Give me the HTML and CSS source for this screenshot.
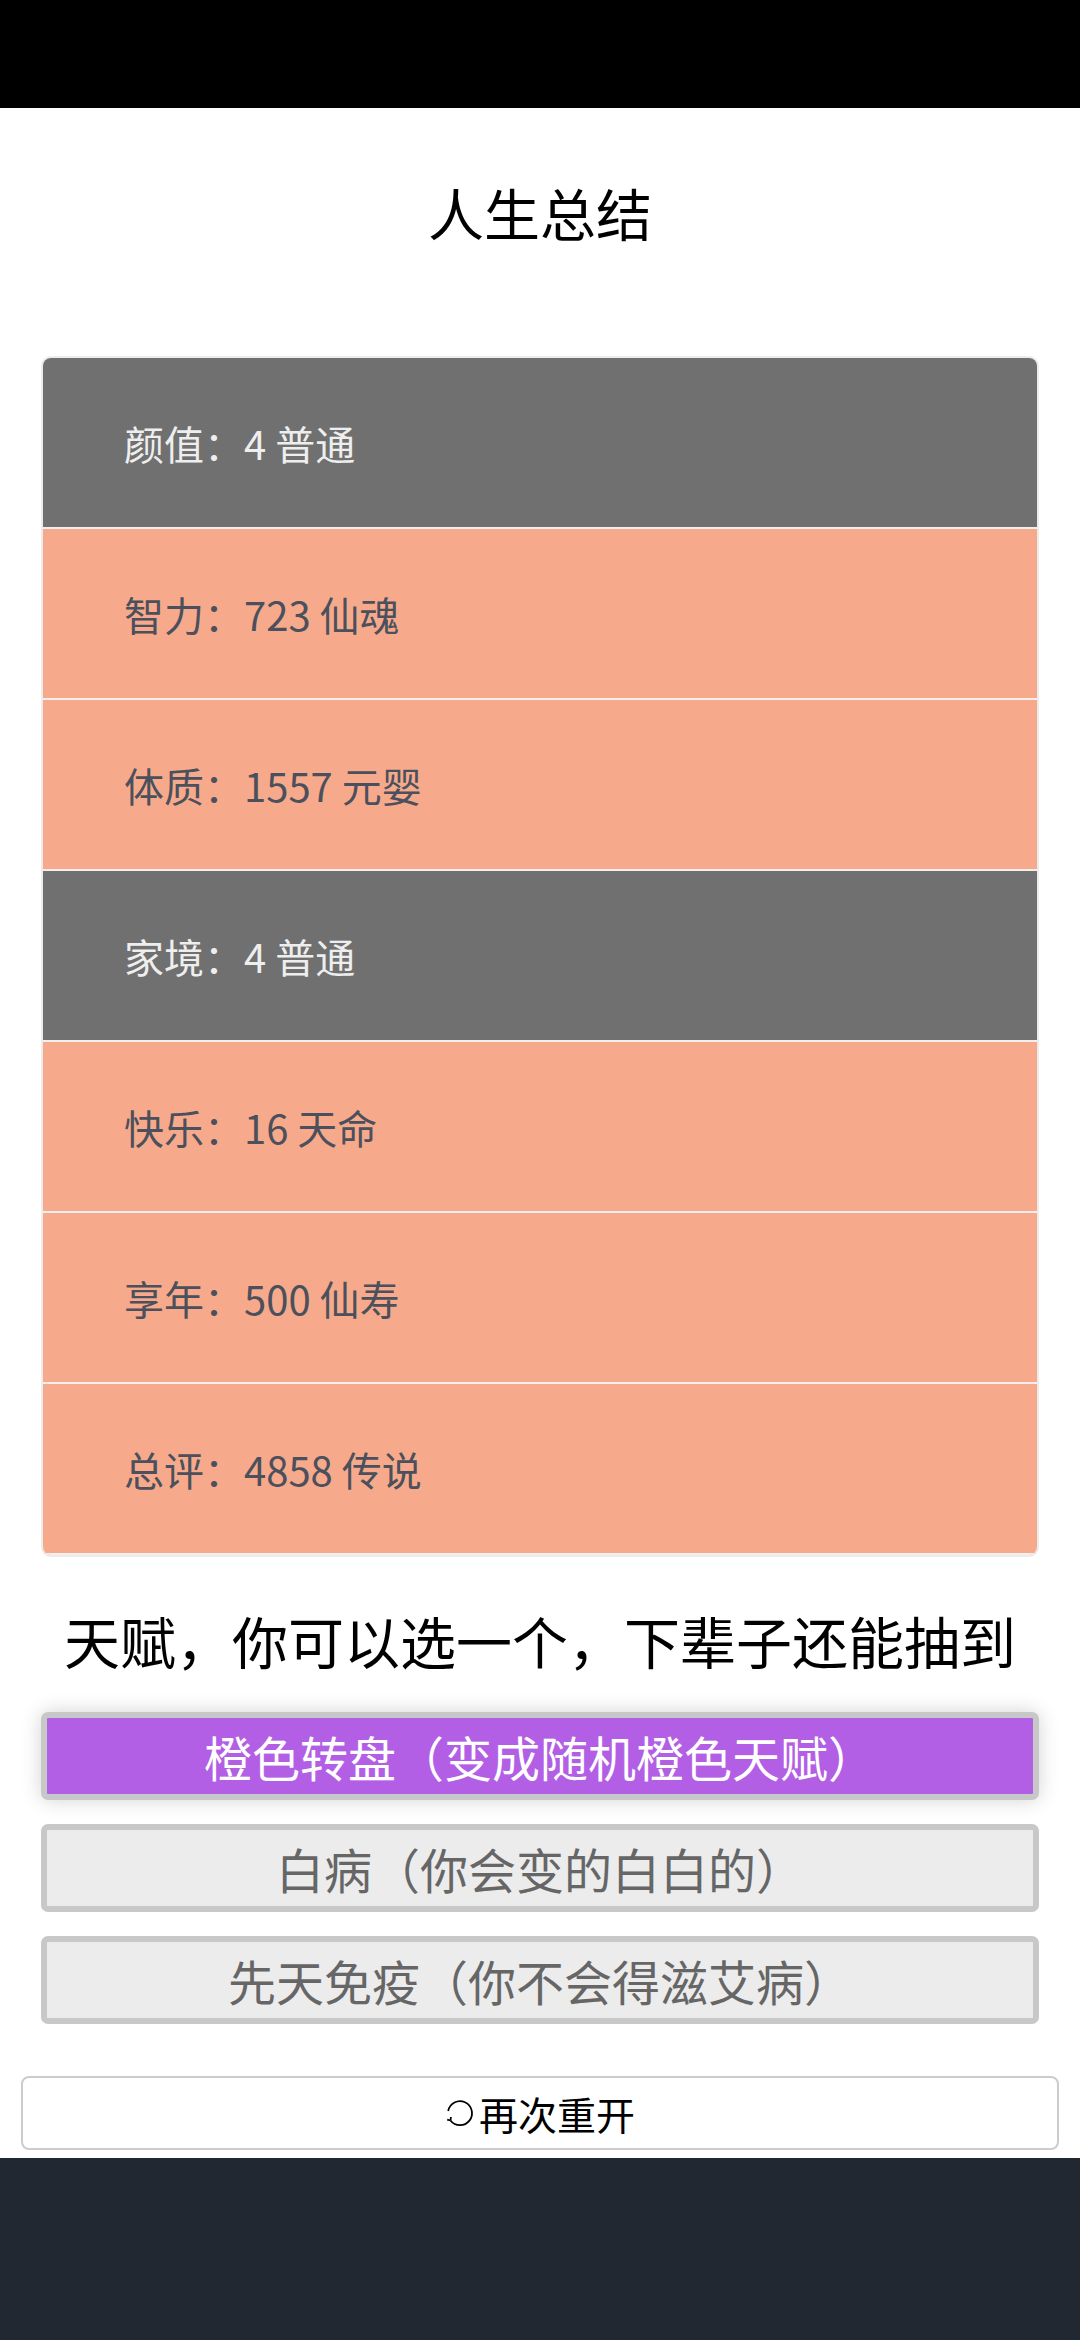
FILE: index.html
```html
<!DOCTYPE html>
<html lang="zh-CN">
<head>
  <meta charset="UTF-8">
  <title>人生总结</title>
  <meta name="viewport" content="width=device-width, initial-scale=1.0">
  <link rel="stylesheet" href="styles.css">
</head>
<body>
  <div class="statusbar"></div>

  <div class="page">
    <h1 class="title">人生总结</h1>

    <ul class="summary">
      <li class="row grade-0">颜值：4 普通</li>
      <li class="row grade-3">智力：723 仙魂</li>
      <li class="row grade-3">体质：1557 元婴</li>
      <li class="row grade-0">家境：4 普通</li>
      <li class="row grade-3">快乐：16 天命</li>
      <li class="row grade-3">享年：500 仙寿</li>
      <li class="row grade-3">总评：4858 传说</li>
    </ul>

    <div class="talent-tip">天赋，你可以选一个，下辈子还能抽到</div>

    <ul class="talents">
      <li class="talent selected">橙色转盘（变成随机橙色天赋）</li>
      <li class="talent">白病（你会变的白白的）</li>
      <li class="talent">先天免疫（你不会得滋艾病）</li>
    </ul>

    <button class="restart">
      <svg class="restart-icon" width="30" height="30" viewBox="0 0 30 30">
        <path d="M3.2 13 A12 12 0 1 1 5.5 22.5" fill="none" stroke="#000" stroke-width="1.8"/>
        <path d="M5.5 22.5 L2.2 21.6 M5.5 22.5 L5.9 19" fill="none" stroke="#000" stroke-width="1.8"/>
      </svg>再次重开
    </button>
  </div>

  <div class="navbar"></div>
</body>
</html>
```

FILE: styles.css
```css
* {
  box-sizing: border-box;
}
html, body {
  margin: 0;
  padding: 0;
  font-family: "Noto Sans CJK SC", "Noto Sans", sans-serif;
  background: #fff;
  color: #000;
}
body {
  display: flex;
  flex-direction: column;
  min-height: 2340px;
}
.statusbar {
  height: 108px;
  background: #000;
}
.page {
  padding: 0 41px;
  display: flex;
  flex-direction: column;
}
.title {
  margin: 66px 0 0;
  font-size: 56px;
  font-weight: 400;
  line-height: 76px;
  text-align: center;
}
ul {
  list-style: none;
  margin: 0;
  padding: 0;
}
.summary {
  margin-top: 106px;
  border: 2px solid #ececec;
  border-radius: 10px;
  overflow: hidden;
}
.row {
  height: 171px;
  padding-left: 81px;
  display: flex;
  align-items: center;
  font-size: 40px;
  border-bottom: 2px solid #f4efed;
}
.grade-0 {
  background: #707070;
  color: #eeeeee;
}
.grade-3 {
  background: #f7aa8b;
  color: #4b505c;
}
.talent-tip {
  margin-top: 44px;
  font-size: 56px;
  line-height: 78px;
  text-align: center;
  white-space: nowrap;
}
.talents {
  margin-top: 33px;
  display: flex;
  flex-direction: column;
  gap: 24px;
}
.talent {
  height: 88px;
  border: 6px solid #c8c8c8;
  border-radius: 7px;
  background: #ececec;
  color: #666;
  font-size: 48px;
  display: flex;
  align-items: center;
  justify-content: center;
}
.talent.selected {
  background: #b35fe5;
  color: #fff;
  box-shadow: 0 0 20px rgba(0, 0, 0, 0.18);
}
.restart {
  margin: 52px -20px 0;
  height: 74px;
  border: 2px solid #cccccc;
  border-radius: 8px;
  background: #fff;
  font-family: inherit;
  font-size: 39px;
  color: #000;
  display: flex;
  align-items: center;
  justify-content: center;
  padding: 0;
}
.restart-icon {
  margin-right: 4px;
}
.navbar {
  margin-top: 8px;
  flex: 1;
  background: #222831;
}
```
